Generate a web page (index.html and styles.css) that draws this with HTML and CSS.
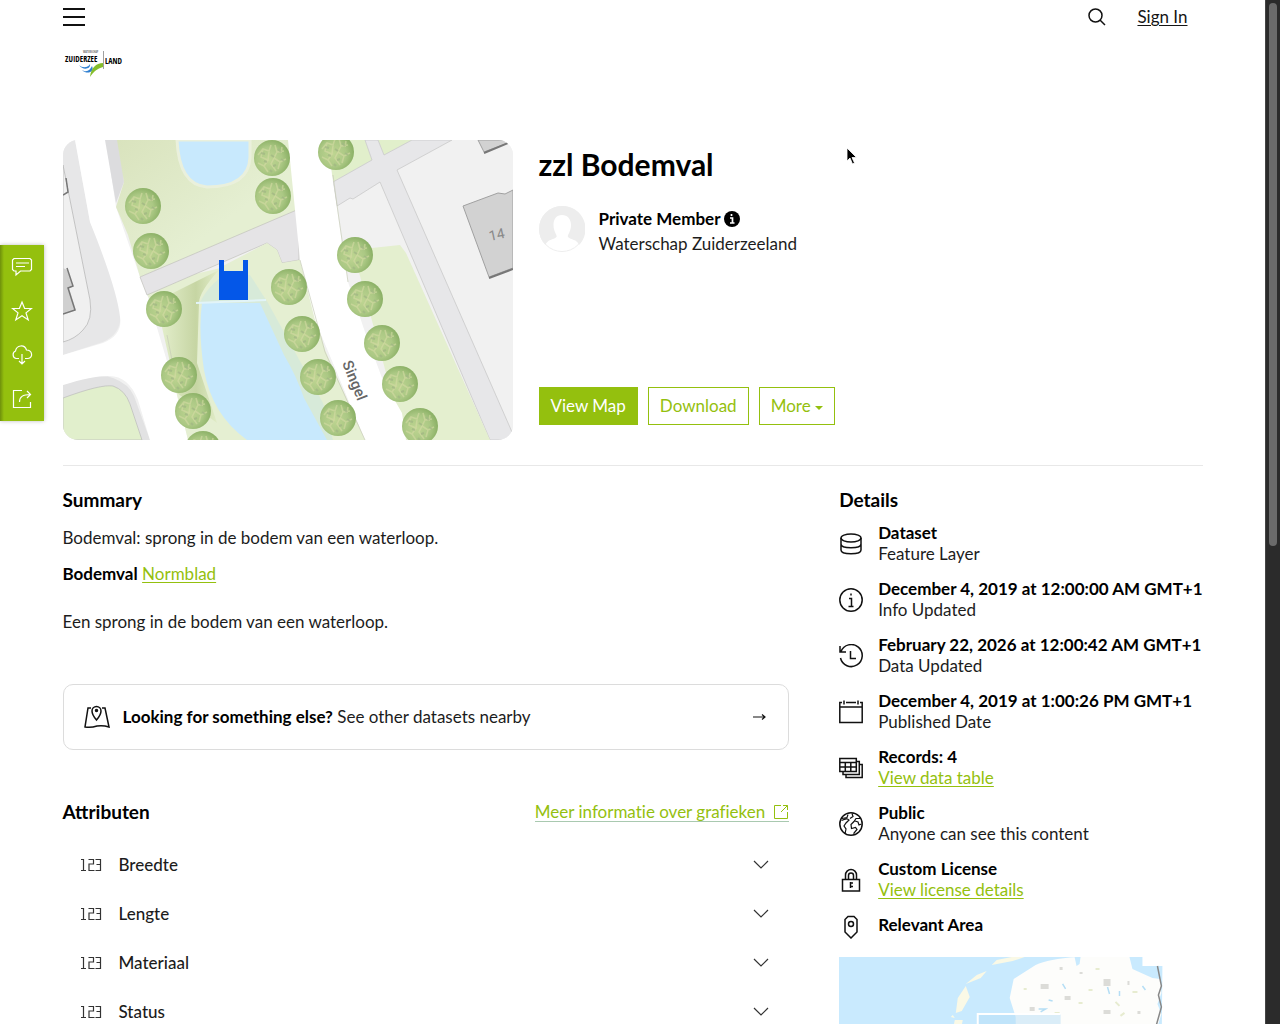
FILE: index.html
```html
<!DOCTYPE html>
<html lang="en">
<head>
<meta charset="utf-8">
<meta name="viewport" content="width=device-width, initial-scale=1">
<title>zzl Bodemval</title>
<link rel="stylesheet" href="styles.css">
</head>
<body>
<svg class="defs" aria-hidden="true">
  <defs>
    <radialGradient id="crown" cx="42%" cy="55%" r="60%">
      <stop offset="0" stop-color="#bfd592"/><stop offset=".6" stop-color="#abc884"/><stop offset="1" stop-color="#88ae63"/>
    </radialGradient>
    <linearGradient id="bank" x1="0" y1="0" x2="1" y2="0">
      <stop offset="0" stop-color="#e3eecb"/><stop offset=".6" stop-color="#c6d5a3"/><stop offset="1" stop-color="#e3eecb"/>
    </linearGradient>
    <linearGradient id="meadow" x1="0" y1="0" x2="1" y2="1">
      <stop offset="0" stop-color="#d9e3bd"/><stop offset=".6" stop-color="#e5efd2"/>
    </linearGradient>
    <symbol id="tree" viewBox="-19 -19 38 38">
      <circle r="18" fill="url(#crown)"/>
      <path d="M-14-3l5-6 6 2 2-6M-9-9l-2 8 7 3 1-8M3-13l2 7 7-1M5-6l-3 6 6 4 6-3M-4 2l-4 6 4 6M2 0l-3 6 5 7M8 4l-2 7M-14 5l6 3M10-11l-1 6" fill="none" stroke="#d4daa4" stroke-width="1.600" opacity=".6"/>
      <path d="M-11-5l4 1M-1-3l3 2M6-9l3 3M-8 3l3 1M1 8l3-1M9 1l3 2M-2 12l2 2" fill="none" stroke="#9fb583" stroke-width="2" opacity=".7"/>
    </symbol>
    <symbol id="num" viewBox="0 0 21 14">
      <path d="M0 1.500h2.500v11M0 12.500h5M7.500 1.500h5v4.500h-4.500v6.500h5.500M14.500 1.500h5v11h-5M15.500 6.500h4" fill="none" stroke="#333" stroke-width="1.200"/>
    </symbol>
    <symbol id="chev" viewBox="0 0 16 9"><path d="M1 1l7 7 7-7" fill="none" stroke="#333" stroke-width="1.200"/></symbol>
  </defs>
</svg>

<div class="screen">
<div class="page">
  <header class="topbar">
    <button class="plain" type="button" aria-label="Menu">
      <svg width="22" height="20" viewBox="0 0 22 20"><path d="M0 2h22M0 10h22M0 18h22" stroke="#111" stroke-width="2"/></svg>
    </button>
    <nav class="account">
      <button class="plain" type="button" aria-label="Search">
        <svg width="18" height="18" viewBox="0 0 18 18" fill="none" stroke="#111" stroke-width="1.500"><circle cx="7.500" cy="7.500" r="6.500"/><path d="M12 12l5 5"/></svg>
      </button>
      <a class="signin" href="#">Sign In</a>
    </nav>
  </header>
  <a class="logo" href="#" aria-label="Waterschap Zuiderzeeland">
    <svg width="60" height="30" viewBox="0 0 60 30">
      <text x="19" y="3" font-size="3" fill="#777">WATERSCHAP</text>
      <text x="1" y="12" font-size="8" font-weight="700">ZUIDERZEE</text>
      <text x="41" y="14" font-size="8" font-weight="700">LAND</text>
      <path d="M39.500 1v18" stroke="#777" stroke-width=".7"/>
      <path d="M15 15c4 4 10 2 11-1 1 5-7 7-11 1zM18 20c5 3 8 0 10-4 3 6-5 9-10 4z" fill="#2f7fd0"/>
      <path d="M39 13c-7 0-12 5-13 14 4-6 7-8 13-10z" fill="#85bd2b"/>
    </svg>
  </a>

  <main>
    <section class="hero">
      <svg class="thumb" viewBox="0 0 450 300" role="img" aria-label="Map thumbnail">
        <rect width="450" height="300" fill="#f1f1f1"/>
        <path d="M0 0h12l15 82 20 46 10 40q4 25-17 34L0 215z" fill="#e7e7e8"/>
        <path d="M0 25l8 40 19 95q3 20-7 30-8 9-20 12z" fill="#f0f0f0" stroke="#b9b9b9" stroke-width=".8"/>
        <path d="M0 128l4 2 6 16-4 2 7 22-13 4z" fill="#d0d0d0"/><path d="M4 128l6 18-5 2 7 22-12 4M3 38l2 14-5 3" fill="none" stroke="#777" stroke-width="1.500"/>
        <path d="M0 245q35-13 50-7 16 6 21 18l16 44H0z" fill="#e2e2e3"/>
        <path d="M0 258q38-14 50-12 12 4 17 18l12 36H0z" fill="#e1efcc" stroke="#bbb" stroke-width=".7"/>
        <path d="M12 0h31l10 67 24 70 7 17 30 101 11 45H87l-12-40q-10-25-30-24-16 0-45 9v-30l40-12q20-8 17-26-3-28-30-95z" fill="#fff"/>
        <path d="M42 0h15l4 42-8 21z" fill="#dcdcde"/>
        <path d="M84 154l20 41 10 60 11 45h130l-20-190-150 35z" fill="#e5efd2"/>
        <path d="M54 0h180v73L77 137 65 95 53 67l8-25z" fill="url(#meadow)"/>
        <path d="M77 137L236 69v51l-17 3-5-13-10-7L84 155z" fill="#e5e4e6" stroke="#c2c2bb" stroke-width=".7"/>
        <path d="M204 103l10 7 5 13 18-3 25 90 40 90h-60L185 140l-29-12z" fill="#e5efd2"/>
        <path d="M104 156l52-26q-20 22-20 33l-2 60 20 60-40-30-16-70z" fill="url(#bank)"/>
        <path d="M137 162q8-15 20-24l30-3 18 28 55 100 10 37h-30z" fill="#d7ead9"/>
        <path d="M114 0q2 45 30 47 42 0 43-30V0z" fill="#c8e9fd" stroke="#eaf0dc" stroke-width="3"/>
        <path d="M139 163h58l24 52q12 20 20 43l23 42h-80q-35-25-43-70-6-40-2-67z" fill="#c8e9fd"/>
        <path d="M133 163l70-3" stroke="#e2f4f8" stroke-width="2"/>
        <path d="M269 28L389 0h61v300H302z" fill="#f1f1f1"/>
        <path d="M264 0h38l7 20-39 22zM315 0h34l-28 15z" fill="#e1efcb"/>
        <path d="M302 0h13l6 15L349 0h40l-55 30 115 262v8h-22L317 42l-27 17-3-1-13 8-4-24 39-22z" fill="#e7e7e9" stroke="#c9c9c9" stroke-width=".8"/>
        <path d="M290 110l47-5 6 8 84 187h-86z" fill="#e4efcf"/>
        <path d="M225 0h39l6 42 15 100 17 50 17 46 20 35 4 27h-41l-50-120-15-60z" fill="#fff"/>
        <path d="M270 35l4 30 11 77M237 120l25 92 40 88M104 195l10 50" stroke="#c7cbb7" stroke-width=".7" fill="none"/>
        <path d="M400 66l35-13 7 1 8-4v78l-24 9zM415 0l6 12 29-11V0z" fill="#d2d2d2" stroke="#a0a0a0"/>
        <path d="M426 138l24-9M421 13l29-12" stroke="#777" stroke-width="2"/>
        <text class="house" x="427" y="101" transform="rotate(-12 427 101)">14</text>
        <g>
          <use href="#tree" x="61" y="47" width="38" height="38"/><use href="#tree" x="69" y="92" width="38" height="38"/>
          <use href="#tree" x="82" y="150" width="38" height="38"/><use href="#tree" x="97" y="216" width="38" height="38"/>
          <use href="#tree" x="111" y="252" width="38" height="38"/><use href="#tree" x="121" y="290" width="38" height="38"/>
          <use href="#tree" x="190" y="-1" width="38" height="38"/><use href="#tree" x="191" y="37" width="38" height="38"/>
          <use href="#tree" x="207" y="128" width="38" height="38"/><use href="#tree" x="220" y="175" width="38" height="38"/>
          <use href="#tree" x="236" y="218" width="38" height="38"/><use href="#tree" x="256" y="259" width="38" height="38"/>
          <use href="#tree" x="254" y="-7" width="38" height="38"/><use href="#tree" x="273" y="96" width="38" height="38"/>
          <use href="#tree" x="283" y="140" width="38" height="38"/><use href="#tree" x="300" y="184" width="38" height="38"/>
          <use href="#tree" x="318" y="225" width="38" height="38"/><use href="#tree" x="338" y="267" width="38" height="38"/>
        </g>
        <path d="M156 120h5v11h19v-11h5v40h-29z" fill="#0457e8"/>
        <text class="street" transform="translate(279 223) rotate(68)">Singel</text>
      </svg>
      <div class="intro">
        <h1>zzl Bodemval</h1>
        <div class="owner">
          <svg width="46" height="46" viewBox="0 0 46 46"><circle cx="23" cy="23" r="22.500" fill="#fff" stroke="#eee"/><path d="M23 0a23 23 0 0 0-16.500 39c2-6 8-5 11-8 1-2-3-5-3-12 0-6 3-10 8.500-10S32 13 32 19c0 7-4 10-3 12 3 3 9 2 11 8A23 23 0 0 0 23 0z" fill="#ededed"/></svg>
          <div>
            <p class="member"><strong>Private Member</strong>
              <svg width="16" height="16" viewBox="0 0 16 16"><circle cx="8" cy="8" r="8"/><path d="M6 7h2.500v4.500M6 12h4.500M7.500 3v2" fill="none" stroke="#fff" stroke-width="1.700"/></svg></p>
            <p>Waterschap Zuiderzeeland</p>
          </div>
        </div>
        <div class="actions">
          <button class="btn primary" type="button">View Map</button>
          <button class="btn" type="button">Download</button>
          <button class="btn" type="button">More <svg width="8" height="4" viewBox="0 0 8 4"><path d="M0 0h8L4 4z" fill="#94c00e"/></svg></button>
        </div>
      </div>
    </section>

    <div class="columns">
      <div class="left">
        <section class="summary">
          <h2>Summary</h2>
          <p>Bodemval: sprong in de bodem van een waterloop.</p>
          <p><strong>Bodemval</strong> <a href="#">Normblad</a></p>
          <p class="last">Een sprong in de bodem van een waterloop.</p>
        </section>
        <a class="nearby" href="#">
          <svg width="26" height="24" viewBox="0 0 26 24" fill="none" stroke="#111" stroke-width="1.500"><path d="M7 3H4L1 22q6 1 12-1 6-1 12 1L21 3h-3"/><path d="M12.500 15C9 11 8 9 8 6a4.500 4.500 0 0 1 9 0c0 3-1 5-4.500 9z"/><circle cx="12.500" cy="5.500" r="1" fill="#111"/></svg>
          <span><strong>Looking for something else?</strong> See other datasets nearby</span>
          <svg width="13" height="8" viewBox="0 0 13 8"><path d="M0 4h12M9 1.500L12 4 9 6.500" fill="none" stroke="#111" stroke-width="1.200"/></svg>
        </a>
        <section>
          <div class="attrhead">
            <h2>Attributen</h2>
            <a class="more" href="#">Meer informatie over grafieken
              <svg width="16" height="16" viewBox="0 0 16 16" fill="none" stroke="#94c00e"><path d="M8 1.500H1.500v13h13V8M10 1.500h4.500V6M14.500 1.500L8 8"/></svg></a>
          </div>
          <div class="attrs">
            <button type="button"><svg width="21" height="14"><use href="#num"/></svg><span>Breedte</span><svg width="16" height="9"><use href="#chev"/></svg></button>
            <button type="button"><svg width="21" height="14"><use href="#num"/></svg><span>Lengte</span><svg width="16" height="9"><use href="#chev"/></svg></button>
            <button type="button"><svg width="21" height="14"><use href="#num"/></svg><span>Materiaal</span><svg width="16" height="9"><use href="#chev"/></svg></button>
            <button type="button"><svg width="21" height="14"><use href="#num"/></svg><span>Status</span><svg width="16" height="9"><use href="#chev"/></svg></button>
          </div>
        </section>
      </div>

      <aside class="details">
        <h2>Details</h2>
        <ul>
          <li><svg viewBox="0 0 24 24"><ellipse cx="12" cy="6" rx="10" ry="4"/><path d="M2 6v12c0 5 20 5 20 0V6M2 12c0 5 20 5 20 0"/></svg>
            <div><strong>Dataset</strong><span>Feature Layer</span></div></li>
          <li><svg viewBox="0 0 24 24"><circle cx="12" cy="12" r="11.200"/><path d="M10 10.500h2.500V18M9.500 18.500h5M12 5.500v2"/></svg>
            <div><strong>December 4, 2019 at 12:00:00 AM GMT+1</strong><span>Info Updated</span></div></li>
          <li><svg viewBox="0 0 24 24"><path d="M2 7.500A11 11 0 1 1 1.500 14M1 2v6h6M11.500 7v7.500H17"/></svg>
            <div><strong>February 22, 2026 at 12:00:42 AM GMT+1</strong><span>Data Updated</span></div></li>
          <li><svg viewBox="0 0 24 24"><path d="M3 2.500H.8v20h22.400v-20H21M7 2.500h10M.8 7h22.400M5 .5v4M19 .5v4"/></svg>
            <div><strong>December 4, 2019 at 1:00:26 PM GMT+1</strong><span>Published Date</span></div></li>
          <li><svg viewBox="0 0 24 24"><path d="M.8 2.500h16.500v13H.8zM.8 6.500h16.500M.8 11h16.500M6.300 6.500v9M11.800 6.500v9M17.500 5.500h2.800v13H4v-3M20.500 8.500h2.700v13H7v-3"/></svg>
            <div><strong>Records: 4</strong><a href="#">View data table</a></div></li>
          <li><svg viewBox="0 0 24 24"><circle cx="12" cy="12" r="11.200"/><path stroke-width="1.200" d="M3 6.500l5-1 1-3M2.500 8.500q4-2 6-1.500l1.500 1-3 3-2 3 2 3-1 5M13 1.500l1 3-3 2M21 6.500l-4 0-2 3-3 3 .5 4 4-1 1.500 2-3 3.500v2M16 9l3 1 1 3 2.500-1"/></svg>
            <div><strong>Public</strong><span>Anyone can see this content</span></div></li>
          <li><svg viewBox="0 0 24 24"><path d="M3.500 11.500h17v11.500h-17zM6.500 11.500V7a5.500 5.500 0 0 1 11 0v4.500M9.500 11.500V7.500a2.500 2.500 0 0 1 5 0v4M11.500 14v6M12 15h2M12 18.500h2"/></svg>
            <div><strong>Custom License</strong><a href="#">View license details</a></div></li>
          <li class="region"><svg viewBox="0 0 24 24"><path d="M9 1.500h6l3 3V17l-6 6-6-6V4.500z"/><circle cx="12" cy="9" r="2.500"/></svg>
            <div><strong>Relevant Area</strong></div></li>
        </ul>
        <svg class="area" viewBox="0 0 364 220" role="img" aria-label="Relevant area">
          <path d="M0 0h304v9h20l-2 211H0z" fill="#c9eafe"/>
          <path d="M176 220l2-65-1-95-6-19 4-19 22-14Q210 2 238 0h53l3 12 20 9 8 1 1 14-4 11 4 10-8 26v132z" fill="#fdfdfb"/>
          <path d="M153 8l5-5 15-3h13l-12 4zM127 27l11-9 10-4-6 7zM117 56l2-15 8-12 4 11-8 14zM112 60l2-2 2 3zM116 63h8l-1 5h-8z" fill="#faf9e6"/>
          <path d="M236 0h6l-1 7-3 2z" fill="#c9eafe"/>
          <path d="M202 27h8v5h-8zM265 22h7v7h-7zM226 39h6v4h-6zM191 50h5v4h-5zM265 53h7v4h-7zM241 15h3v2h-3zM299 54h3v3h-3zM221 10h3v3h-3zM289 24h2v4h-2z" fill="#dcdcd8"/>
          <path d="M224 27l3 5M304 29l3 4M281 34v5M269 30l2 7M210 43l4 1M200 52h7l-5 3" stroke="#b5def5" fill="none" stroke-width="1.500"/>
          <path d="M216 56h5M250 33h4M282 59l4-3M240 46h4M294 35h5M185 32h3M257 12h4M277 45l4 4" stroke="#e7ecd0" stroke-width="2"/>
          <path d="M319 9l4 20-3 9 3 12-5 18v152" fill="none" stroke="#888" stroke-width="1.500"/>
          <path d="M139 57h83v110h-83z" fill="#b8def5" fill-opacity=".5"/>
          <path d="M222 57h-83v110" fill="none" stroke="#fff" stroke-width="2"/>
        </svg>
      </aside>
    </div>
  </main>
</div>
<div class="track"><div class="thumbbar"></div></div>
</div>

<nav class="tools" aria-label="Tools">
  <button type="button" aria-label="Comments"><svg viewBox="0 0 22 22"><path d="M3 2.500h16l1.500 1.500v9.500L19 15H9.500L5 19v-4H3l-1.500-1.500V4zM5 7h13M5 10.500h9"/></svg></button>
  <button type="button" aria-label="Favorite"><svg viewBox="0 0 22 22"><path d="M11 2l2.600 6.500h6.900l-5.500 4.400 2.200 7L11 15.800l-6.200 4.100 2.200-7-5.500-4.400h6.900z"/></svg></button>
  <button type="button" aria-label="Download"><svg viewBox="0 0 22 22"><path d="M8 14.500H5A4 4 0 0 1 4.500 7c1-6 9-7 11-1 6 0 7 8 1.500 8.500h-3M11 10v10M8 17l3 3 3-3"/></svg></button>
  <button type="button" aria-label="Share"><svg viewBox="0 0 22 22"><path d="M11 2.500H2.500v17h17V14M8.500 14c0-5 3-7.500 11-7.500M16 3l3.500 3.500L16 10"/></svg></button>
</nav>
<svg class="pointer" width="12" height="18" viewBox="0 0 12 18" aria-hidden="true"><path d="M1 1v13l3-3 2.500 6 2-1L6 10.500h4.500z" fill="#000" stroke="#fff" stroke-width=".8"/></svg>
</body>
</html>
```
FILE: styles.css
```css
* { box-sizing: border-box; }
body { margin: 0; background: #fff; color: #1c1c1c; font: 400 17px/24px Lato, "Liberation Sans", sans-serif; }
h1, h2, p, ul { margin: 0; padding: 0; }
svg { flex: none; }
button { font: inherit; color: inherit; cursor: pointer; }
a { color: #94c00e; text-underline-offset: 2px; }
strong { font-weight: 700; color: #000; }
.defs { position: absolute; width: 0; height: 0; }

.screen { display: grid; grid-template-columns: minmax(0, 1fr) 15px; height: 100vh; overflow: hidden; }
.page { width: 100%; max-width: 1140px; margin: 0 auto; }
.track { background: #2b2b2b; padding: 3px; border-left: 1px solid #444; }
.thumbbar { height: 53vh; border-radius: 5px; background: #6b6b6b; }

.topbar { display: flex; justify-content: space-between; align-items: center; height: 34px; padding-right: 15px; }
.plain { display: flex; padding: 0; border: 0; background: none; }
.account { display: flex; align-items: center; gap: 31px; }
.signin { color: #151515; }
.logo { display: flex; height: 30px; margin: 16px 0 60px; padding-left: 1px; color: #000; }
.logo text { font-family: "Liberation Sans Narrow", "Open Sans Condensed", "DejaVu Sans Condensed", sans-serif; }

.hero { display: flex; gap: 26px; padding-bottom: 25px; border-bottom: 1px solid #e8e8e8; }
.thumb { width: 450px; height: 300px; border-radius: 15px; }
.house { font: 14px Roboto, sans-serif; fill: #888; }
.street { font: 500 15px Roboto, sans-serif; fill: #666; }
.intro { display: flex; flex-direction: column; flex: 1; padding: 7px 0 15px; }
h1 { font-size: 30px; line-height: 34px; font-weight: 700; color: #000; }
.owner { display: flex; gap: 14px; margin-top: 25px; line-height: 25px; }
.member { display: flex; align-items: center; gap: 4px; }
.actions { display: flex; gap: 10px; margin-top: auto; }
.btn { height: 38px; padding: 0 11px; border: 1px solid #94c00e; background: #fff; color: #94c00e; }
.btn svg { vertical-align: middle; }
.primary { background: #94c00e; color: #fff; }

.columns { display: grid; grid-template-columns: minmax(0, 2fr) minmax(0, 1fr); gap: 50px; padding-top: 21px; }
h2 { font-size: 19px; line-height: 26px; font-weight: 700; color: #000; }
.summary { display: grid; gap: 12px; }
.summary h2 { margin-bottom: 1px; }
.last { margin-top: 12px; }
.nearby { display: flex; align-items: center; gap: 13px; height: 66px; margin-top: 50px; padding: 0 22px 0 20px; border: 1px solid #dcdcdc; border-radius: 10px; color: #1c1c1c; text-decoration: none; }
.nearby span { flex: 1; }
.attrhead { display: flex; justify-content: space-between; align-items: center; margin-top: 49px; }
.more { display: flex; align-items: center; gap: 8px; line-height: 19px; text-decoration: none; border-bottom: 1px solid #a9c9b0; font-variant-ligatures: none; }
.attrs { display: grid; margin-top: 15px; }
.attrs button { display: flex; align-items: center; gap: 17px; height: 49px; padding: 0 20px 0 18px; border: 0; background: none; text-align: left; font-weight: 500; }
.attrs span { flex: 1; }

.details ul { display: grid; gap: 15px; margin-top: 10px; list-style: none; }
.details li { display: flex; align-items: center; gap: 15px; }
.details li div { display: grid; grid-template-rows: 21px; grid-auto-rows: 20px; line-height: 20px; white-space: nowrap; }
.details li svg { width: 24px; height: 24px; fill: none; stroke: #111; stroke-width: 1.5; }
.details li a { justify-self: start; }
.details .region { align-items: flex-start; }
.area { display: block; width: 100%; margin-top: 18px; }

.tools { position: absolute; left: 0; top: 245px; width: 44px; padding: 0; background: linear-gradient(90deg, #6f900b, #94c00e 4px); box-shadow: 0 0 4px #bbb; }
.tools button { display: grid; place-items: center; width: 44px; height: 44px; padding: 0; border: 0; background: none; }
.tools svg { width: 22px; height: 22px; fill: none; stroke: #fff; stroke-width: 1.2; }
.pointer { position: absolute; left: 846px; top: 147px; }
```
